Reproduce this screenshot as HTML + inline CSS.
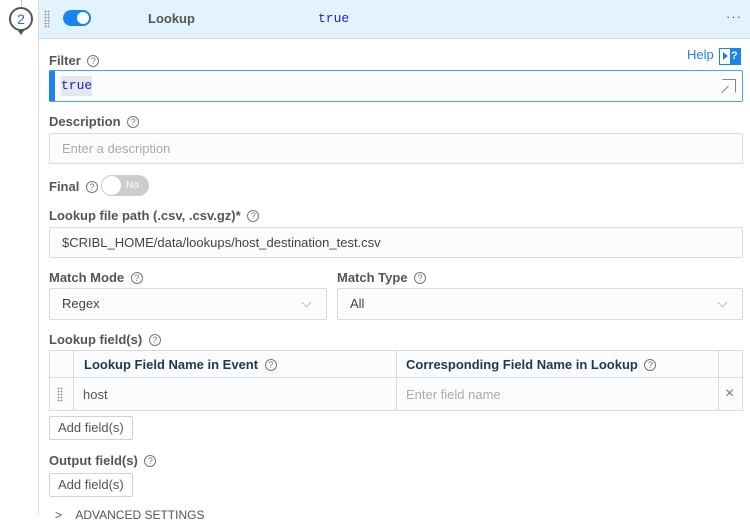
<!DOCTYPE html>
<html><head><style>
*{box-sizing:border-box;margin:0;padding:0}
body{width:750px;height:515px;overflow:hidden;background:#fff;font-family:"Liberation Sans",sans-serif;position:relative;color:#555}
.a{position:absolute}
.lbl{position:absolute;left:49px;font-size:13px;font-weight:bold;color:#555}
.q{display:inline-block;width:12px;height:12px;border:1px solid #777;border-radius:50%;font-size:9px;text-align:center;line-height:10px;font-weight:normal;color:#777;vertical-align:1px;margin-left:3px}
.inp{position:absolute;border:1px solid #d5dbe0;border-radius:2px;background:#fafcfd;font-size:13px;padding-left:12px;color:#444}
.btn{position:absolute;left:49px;width:84px;height:24px;border:1px solid #ccd3d9;border-radius:2px;font-size:13px;color:#555;padding-left:8px;line-height:22px;background:#fff}
.chev{position:absolute;right:16px;top:10px;width:7px;height:7px;border-right:1px solid #bbb;border-bottom:1px solid #bbb;transform:rotate(45deg)}
</style></head><body>
<div class="a" style="left:21px;top:0;width:1px;height:8px;background:#ccc"></div>
<div class="a" style="left:38px;top:0;width:1px;height:515px;background:#ddd"></div>
<div class="a" style="left:16px;top:28px;width:0;height:0;border-left:5px solid transparent;border-right:5px solid transparent;border-top:7px solid #555"></div>
<div class="a" style="left:9px;top:7px;width:24px;height:24px;border:2px solid #555;border-radius:50%;background:#fff;font-size:14px;color:#2a6bc4;text-align:center;line-height:20px">2</div>
<div class="a" style="left:39px;top:0;width:711px;height:39px;background:#e3f3fd;border-bottom:1px solid #cfdde6"></div>
<div class="a" style="left:44px;top:10px;width:6px;height:18px;background-image:radial-gradient(#999 0.8px,transparent 1px);background-size:3px 3px"></div>
<div class="a" style="left:63px;top:10px;width:28px;height:16px;border-radius:8px;background:#1a84ee"></div>
<div class="a" style="left:77px;top:12px;width:12px;height:12px;border-radius:50%;background:#fff"></div>
<div class="a" style="left:148px;top:11px;font-size:13px;font-weight:bold;color:#555">Lookup</div>
<div class="a" style="left:318px;top:11px;font-family:'Liberation Mono',monospace;font-size:13px;color:#2020d0">true</div>
<div class="a" style="left:726px;top:9px;font-size:13px;color:#555;letter-spacing:1px">···</div>

<div class="lbl" style="top:53px">Filter <span class="q">?</span></div>
<div class="a" style="left:687px;top:47px;font-size:13px;color:#1a84ee">Help</div>
<div class="a" style="left:719px;top:48px;width:22px;height:17px;border:1px solid #1a84ee;background:#1a84ee;font-size:11px;color:#fff;font-weight:bold;padding-left:11px;line-height:15px">?</div>
<div class="a" style="left:720px;top:49px;width:10px;height:15px;background:#fff"></div>
<div class="a" style="left:723px;top:52px;width:0;height:0;border-top:4px solid transparent;border-bottom:4px solid transparent;border-left:5px solid #1a84ee"></div>
<div class="inp" style="left:49px;top:70px;width:694px;height:32px;border:1px solid #4aa3f0;border-left:6px solid #1a84ee;padding-left:6px;background:#fafcfd"><span style="display:inline-block;margin-top:5px;background:#e4e7ec;font-family:'Liberation Mono',monospace;color:#2020d0;padding:2px 0;line-height:16px">true</span></div>
<div class="a" style="left:722px;top:79px;width:14px;height:14px;border:1px solid #888;border-left-color:transparent;border-bottom-color:transparent"></div>
<div class="a" style="left:720px;top:89px;width:10px;height:1px;background:#888;transform:rotate(-45deg)"></div>

<div class="lbl" style="top:114px">Description <span class="q">?</span></div>
<div class="inp" style="left:49px;top:133px;width:694px;height:31px;line-height:29px;color:#aaa">Enter a description</div>

<div class="lbl" style="top:179px">Final <span class="q">?</span></div>
<div class="a" style="left:101px;top:175px;width:48px;height:21px;border-radius:11px;background:#ccc;font-size:10px;color:#fff;padding-left:25px;line-height:21px">No</div>
<div class="a" style="left:102px;top:176px;width:19px;height:19px;border-radius:50%;background:#fff"></div>

<div class="lbl" style="top:208px">Lookup file path (.csv, .csv.gz)* <span class="q">?</span></div>
<div class="inp" style="left:49px;top:227px;width:694px;height:31px;line-height:29px">$CRIBL_HOME/data/lookups/host_destination_test.csv</div>

<div class="lbl" style="top:270px">Match Mode <span class="q">?</span></div>
<div class="lbl" style="top:270px;left:337px">Match Type <span class="q">?</span></div>
<div class="inp" style="left:49px;top:288px;width:278px;height:32px;line-height:30px">Regex<div class="chev"></div></div>
<div class="inp" style="left:337px;top:288px;width:406px;height:32px;line-height:30px">All<div class="chev"></div></div>

<div class="lbl" style="top:332px">Lookup field(s) <span class="q">?</span></div>
<div class="a" style="left:49px;top:350px;width:694px;height:61px;border:1px solid #d5dbe0;background:#fafcfd"></div>
<div class="a" style="left:49px;top:377px;width:694px;height:1px;background:#d5dbe0"></div>
<div class="a" style="left:73px;top:350px;width:1px;height:61px;background:#d5dbe0"></div>
<div class="a" style="left:396px;top:350px;width:1px;height:61px;background:#d5dbe0"></div>
<div class="a" style="left:718px;top:350px;width:1px;height:61px;background:#d5dbe0"></div>
<div class="a" style="left:84px;top:357px;font-size:13px;font-weight:bold;color:#1d3a52">Lookup Field Name in Event <span class="q">?</span></div>
<div class="a" style="left:406px;top:357px;font-size:13px;font-weight:bold;color:#1d3a52">Corresponding Field Name in Lookup <span class="q">?</span></div>
<div class="a" style="left:57px;top:387px;width:6px;height:15px;background-image:radial-gradient(#999 0.8px,transparent 1px);background-size:3px 3px"></div>
<div class="a" style="left:83px;top:387px;font-size:13px;color:#555">host</div>
<div class="a" style="left:406px;top:387px;font-size:13px;color:#aaa">Enter field name</div>
<div class="a" style="left:725px;top:385px;font-size:16px;color:#777">×</div>
<div class="btn" style="top:416px">Add field(s)</div>

<div class="lbl" style="top:453px">Output field(s) <span class="q">?</span></div>
<div class="btn" style="top:473px">Add field(s)</div>
<div class="a" style="left:55px;top:508px;font-size:12px;color:#555">&gt;&nbsp;&nbsp;&nbsp;&nbsp;ADVANCED SETTINGS</div>
</body></html>
